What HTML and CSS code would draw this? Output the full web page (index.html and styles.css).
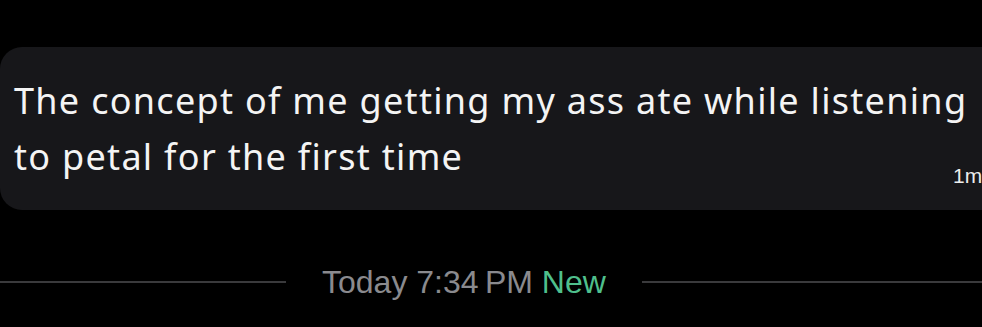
FILE: index.html
```html
<!DOCTYPE html>
<html>
<head>
<meta charset="utf-8">
<link rel="stylesheet" href="styles.css">
</head>
<body>
<main class="chat">
  <div class="bubble">
    <p class="msg">The concept of me getting my ass ate while listening to petal for the first time</p>
    <span class="time">1m</span>
  </div>
  <div class="divider">
    <span class="rule rule-left"></span>
    <span class="stamp">Today 7:34&#8201;PM <span class="new">New</span></span>
    <span class="rule"></span>
  </div>
</main>
</body>
</html>
```
FILE: styles.css
```css
html, body {
  margin: 0;
  padding: 0;
  background: #000;
  overflow: hidden;
}
.chat {
  width: 982px;
  height: 327px;
  display: flex;
  flex-direction: column;
  padding-top: 47px;
  box-sizing: border-box;
  font-family: "Noto Sans", "Open Sans", sans-serif;
}
.bubble {
  width: 1010px;
  height: 163px;
  box-sizing: border-box;
  background: #17171a;
  border-radius: 22px;
  padding: 26px 0 0 14px;
  position: relative;
}
.msg {
  margin: 0;
  color: #f4f4f4;
  font-size: 36px;
  letter-spacing: 1.3px;
  line-height: 56px;
  width: 968px;
}
.time {
  position: absolute;
  left: 953px;
  top: 117px;
  color: #ececec;
  font-family: "Liberation Sans", Arial, sans-serif;
  font-size: 21px;
}
.divider {
  margin-top: 53px;
  display: flex;
  align-items: center;
  gap: 36px;
}
.rule {
  flex: 1;
  height: 2px;
  background: #3a3a3c;
}
.rule-left {
  flex: 0 0 286px;
}
.stamp {
  color: #8a8a8e;
  font-family: "Liberation Sans", Arial, sans-serif;
  font-size: 32px;
  line-height: 38px;
}
.new {
  color: #4fbf8c;
}
```
